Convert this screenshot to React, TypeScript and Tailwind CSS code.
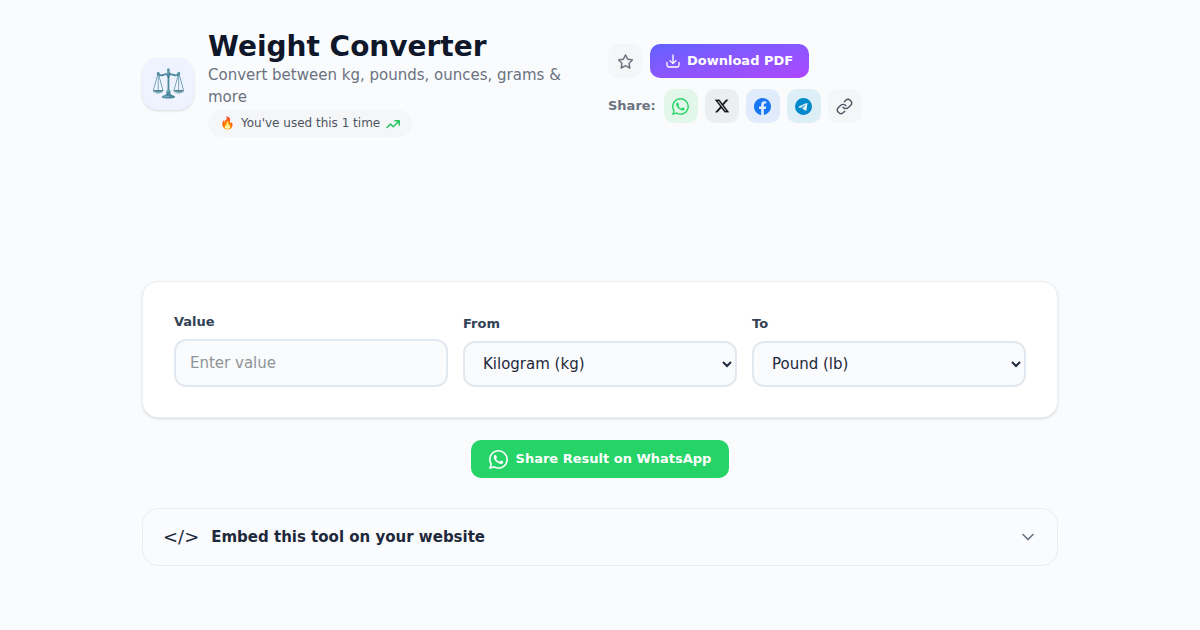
import { useState } from 'react'
import { BsStar, BsWhatsapp, BsTwitterX, BsFacebook, BsTelegram } from 'react-icons/bs'
import { FiLink, FiChevronDown } from 'react-icons/fi'

const UNITS = [
  { value: 'kg', label: 'Kilogram (kg)' },
  { value: 'lb', label: 'Pound (lb)' },
  { value: 'oz', label: 'Ounce (oz)' },
  { value: 'g', label: 'Gram (g)' },
]

const SHARE_LINKS = [
  { name: 'WhatsApp', icon: <BsWhatsapp size={17} />, className: 'bg-[#e2f7ea] text-[#25d366]' },
  { name: 'X', icon: <BsTwitterX size={14} strokeWidth={0.3} />, className: 'bg-[#edeef1] text-[#0f1419]' },
  { name: 'Facebook', icon: <BsFacebook size={17} />, className: 'bg-[#e0ebfb] text-[#1877f2]' },
  { name: 'Telegram', icon: <BsTelegram size={17} />, className: 'bg-[#dceef6] text-[#0088cc]' },
]

function DownloadIcon() {
  return (
    <svg width="14" height="14" viewBox="0 0 14 14" fill="none" stroke="currentColor" strokeWidth="1.3" strokeLinecap="round" strokeLinejoin="round">
      <path d="M1 8.5v2.7A1.8 1.8 0 0 0 2.8 13h8.4A1.8 1.8 0 0 0 13 11.2V8.5M7 1v8.5M4 6.6l3 3 3-3" />
    </svg>
  )
}

function TrendIcon() {
  return (
    <svg width="14" height="14" viewBox="0 0 14 14" fill="none" stroke="currentColor" strokeWidth="1.5" strokeLinecap="round" strokeLinejoin="round">
      <path d="M1 10.5 4.5 7l2.8 2.8L13 4M9 3.7h4.2v4.2" />
    </svg>
  )
}

interface UnitSelectProps {
  id: string
  label: string
  value: string
  onChange: (value: string) => void
}

function UnitSelect({ id, label, value, onChange }: UnitSelectProps) {
  return (
    <div className="flex flex-col gap-2">
      <label htmlFor={id} className="text-[13px] leading-[18px] font-semibold text-[#334155]">
        {label}
      </label>
      <select
        id={id}
        value={value}
        onChange={(e) => onChange(e.target.value)}
        className="h-[46px] w-full rounded-xl border-2 border-[#e2e8f0] bg-[#fafbfd] px-[14px] text-[15px] text-[#1e293b]"
      >
        {UNITS.map((u) => (
          <option key={u.value} value={u.value}>
            {u.label}
          </option>
        ))}
      </select>
    </div>
  )
}

export default function App() {
  const [amount, setAmount] = useState('')
  const [from, setFrom] = useState('kg')
  const [to, setTo] = useState('lb')
  const [embedOpen, setEmbedOpen] = useState(false)

  return (
    <div className="min-h-screen bg-[#fafbfd] px-5 pt-[30px] pb-16 font-['DejaVu_Sans',sans-serif]">
      <main className="mx-auto max-w-[916px]">
        <header className="grid grid-cols-2 items-center gap-4">
          {/* Title block */}
          <div className="flex items-center gap-[14px]">
            <div className="flex size-[52px] shrink-0 items-center justify-center rounded-2xl bg-[#eef3ff] text-[28px] leading-none shadow-sm">
              ⚖️
            </div>
            <div>
              <h1 className="text-[28px] leading-[34px] font-bold text-[#0f172a]">Weight Converter</h1>
              <p className="text-[15px] leading-[22px] text-[#6b7280]">
                Convert between kg, pounds, ounces, grams &amp; more
              </p>
              <div className="mt-[2px] flex w-fit items-center gap-[6px] rounded-full bg-[#f5f6f8] px-3 py-1 text-xs leading-[19px] text-[#4b5563]">
                <span>🔥</span>
                <span>You've used this 1 time</span>
                <span className="text-[#22c55e]">
                  <TrendIcon />
                </span>
              </div>
            </div>
          </div>

          {/* Actions */}
          <div className="flex flex-col gap-[11px]">
            <div className="flex items-center gap-2">
              <button aria-label="Add to favourites" className="flex size-[34px] items-center justify-center rounded-[10px] bg-[#f5f6f8] text-[#5f6672]">
                <BsStar size={15} strokeWidth={0.4} />
              </button>
              <button className="flex h-[34px] items-center gap-[7px] rounded-[10px] bg-linear-to-br from-[#6160ff] to-[#ad46ff] px-4 text-[13px] font-semibold text-white">
                <DownloadIcon />
                Download PDF
              </button>
            </div>
            <div className="flex items-center gap-[7px]">
              <span className="mr-px text-[13px] font-semibold text-[#6b7280]">Share:</span>
              {SHARE_LINKS.map((s) => (
                <a key={s.name} href="#" aria-label={s.name} className={`flex size-[34px] items-center justify-center rounded-[10px] ${s.className}`}>
                  {s.icon}
                </a>
              ))}
              <button aria-label="Copy link" className="flex size-[34px] items-center justify-center rounded-[10px] bg-[#f5f6f8] text-[#4b5563]">
                <FiLink size={17} />
              </button>
            </div>
          </div>
        </header>

        <section className="mt-36 grid grid-cols-3 items-end gap-[15px] rounded-2xl border border-[#edf0f4] bg-white px-[31px] pt-[31px] pb-[30px] shadow-sm">
          <div className="flex flex-col gap-2">
            <label htmlFor="amount" className="text-[13px] leading-[18px] font-semibold text-[#334155]">
              Value
            </label>
            <input
              id="amount"
              type="number"
              placeholder="Enter value"
              value={amount}
              onChange={(e) => setAmount(e.target.value)}
              className="h-12 w-full rounded-xl border-2 border-[#e2e8f0] bg-[#fafbfd] px-[14px] text-[15px] text-[#1e293b] placeholder:text-[#8e9499]"
            />
          </div>
          <UnitSelect id="from" label="From" value={from} onChange={setFrom} />
          <UnitSelect id="to" label="To" value={to} onChange={setTo} />
        </section>

        <div className="mt-[22px] flex justify-center">
          <button className="flex h-[38px] items-center gap-2 rounded-[10px] bg-[#25d366] px-[18px] text-[13px] font-semibold text-white">
            <BsWhatsapp size={19} />
            Share Result on WhatsApp
          </button>
        </div>

        <section className="mt-[30px] rounded-2xl border border-[#e9ecf1]">
          <button
            onClick={() => setEmbedOpen(!embedOpen)}
            aria-expanded={embedOpen}
            className="flex h-14 w-full items-center gap-3 pr-[19px] pl-5 text-[15px] font-semibold text-[#1e293b]"
          >
            <span className="text-lg font-normal">&lt;/&gt;</span>
            <span>Embed this tool on your website</span>
            <FiChevronDown size={20} className="ml-auto text-[#6b7280]" />
          </button>
        </section>
      </main>
    </div>
  )
}
